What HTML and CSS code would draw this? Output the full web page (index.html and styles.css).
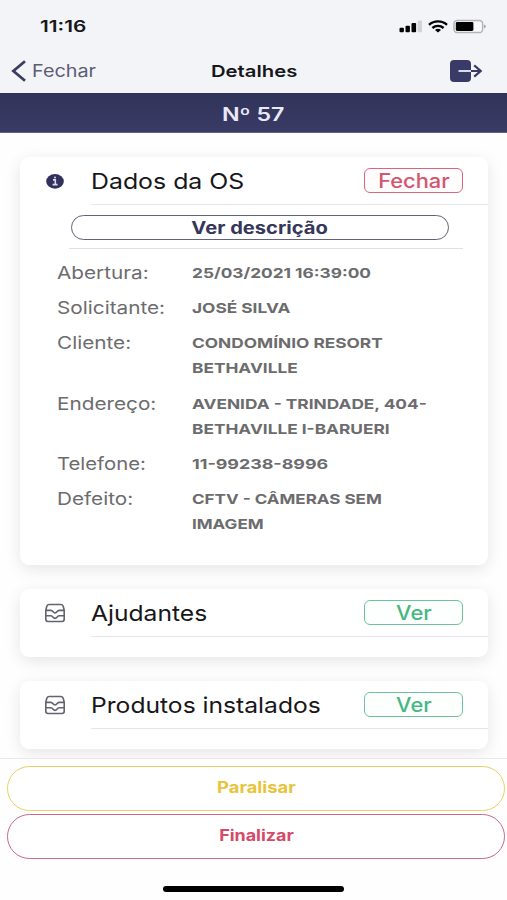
FILE: index.html
```html
<!DOCTYPE html>
<html lang="pt-BR">
<head>
<meta charset="utf-8">
<title>Detalhes</title>
<link rel="stylesheet" href="styles.css">
</head>
<body>
<div class="app">
  <header class="top">
    <div class="status">
      <span class="time wide">11:16</span>
      <div class="status-icons">
        <svg class="signal" width="24" height="13" viewBox="0 0 24 13"><rect x="0.5" y="7.8" width="4.4" height="4.4" rx="1"/><rect x="6.5" y="5.8" width="4.4" height="6.4" rx="1"/><rect x="12.5" y="3" width="4.6" height="9.2" rx="1"/><rect x="18.6" y="0.6" width="4.4" height="11.6" rx="1" fill="#d3d3d5"/></svg>
        <svg class="wifi" width="20" height="13" viewBox="0 0 20 13" fill="none" stroke="#000" stroke-width="2.4"><path d="M1 4.8C6 .2 14 .2 19 4.8"/><path d="M4.4 8C7.6 5.1 12.4 5.1 15.6 8"/><path d="M7 9.9C8.8 8.4 11.2 8.4 13 9.9L10 12.6Z" fill="#000" stroke="none"/></svg>
        <svg class="battery" width="33" height="15" viewBox="0 0 33 15"><rect x="1" y="1.4" width="28.6" height="12.2" rx="3.4" fill="#fafafb" stroke="#b4b4b8" stroke-width="1.5"/><rect x="2.8" y="3.1" width="17.6" height="8.8" rx="1.4"/><path d="M31 5.6q1.8.6 1.8 1.9T31 9.4Z" fill="#a5a5a9"/></svg>
      </div>
    </div>
    <nav class="nav">
      <a class="back"><svg width="15" height="22" viewBox="0 0 15 22" fill="none" stroke="#3b3c63" stroke-width="2.8"><path d="M14 1.2L2.4 11L14 20.8"/></svg><span class="back-text wide">Fechar</span></a>
      <h1 class="title"><span class="wide">Detalhes</span></h1>
      <svg class="exit" width="34" height="24" viewBox="0 0 34 24" fill="none"><rect x="1" y="1" width="21" height="22" rx="4" fill="#3a3a68"/><path d="M9.5 12H22" stroke="#d9daea" stroke-width="2"/><path d="M22 12H31.5M25.2 6.3L31.7 12L25.2 17.7" stroke="#3a3a68" stroke-width="2.2"/></svg>
    </nav>
  </header>
  <div class="band"><span class="wide">Nº 57</span></div>

  <main class="content">
    <section class="card card-main">
      <div class="card-head">
        <svg class="card-icon" width="22" height="20" viewBox="0 0 22 20"><ellipse cx="11" cy="10.4" rx="8.8" ry="7.3" fill="#32315e"/><path d="M9 8.9h2.3v4.4M8.6 13.6h5" stroke="#d9d9ea" stroke-width="1.6" fill="none"/><circle cx="11" cy="6.4" r="1" fill="#d9d9ea"/></svg>
        <div class="card-bar"><h2><span class="wide">Dados da OS</span></h2><button class="toggle close"><span class="wide">Fechar</span></button></div>
      </div>
      <div class="describe"><button class="pill"><span class="wide">Ver descrição</span></button></div>
      <dl class="fields">
        <dt><span class="wide">Abertura:</span></dt><dd><span class="wide">25/03/2021 16:39:00</span></dd>
        <dt><span class="wide">Solicitante:</span></dt><dd><span class="wide">JOSÉ SILVA</span></dd>
        <dt><span class="wide">Cliente:</span></dt><dd><span class="wide">CONDOMÍNIO RESORT<br>BETHAVILLE</span></dd>
        <dt><span class="wide">Endereço:</span></dt><dd><span class="wide">AVENIDA - TRINDADE, 404-<br>BETHAVILLE I-BARUERI</span></dd>
        <dt><span class="wide narrow">Telefone:</span></dt><dd><span class="wide phone">11-99238-8996</span></dd>
        <dt><span class="wide">Defeito:</span></dt><dd><span class="wide defect">CFTV - CÂMERAS SEM<br>IMAGEM</span></dd>
      </dl>
    </section>

    <section class="card card-small">
      <div class="card-head">
        <svg class="card-icon" width="22" height="20" viewBox="0 0 22 20" fill="none" stroke="#62636f" stroke-width="1.6" stroke-linejoin="round"><path d="M1.8 7.2L2.8 3.2Q3.4 1.5 5.4 1.5H16.6Q18.6 1.5 19.2 3.2L20.2 7.2V16Q20.2 18.5 18 18.5H4Q1.8 18.5 1.8 16Z"/><path d="M1.8 7.4H6.8Q8.2 7.4 8.8 8.6Q11 11.4 13.2 8.6Q13.8 7.4 15.2 7.4H20.2M1.8 12.8H6.8Q8.2 12.8 8.8 14Q11 16.8 13.2 14Q13.8 12.8 15.2 12.8H20.2"/></svg>
        <div class="card-bar"><h2><span class="wide">Ajudantes</span></h2><button class="toggle view"><span class="wide">Ver</span></button></div>
      </div>
    </section>

    <section class="card card-small">
      <div class="card-head">
        <svg class="card-icon" width="22" height="20" viewBox="0 0 22 20" fill="none" stroke="#62636f" stroke-width="1.6" stroke-linejoin="round"><path d="M1.8 7.2L2.8 3.2Q3.4 1.5 5.4 1.5H16.6Q18.6 1.5 19.2 3.2L20.2 7.2V16Q20.2 18.5 18 18.5H4Q1.8 18.5 1.8 16Z"/><path d="M1.8 7.4H6.8Q8.2 7.4 8.8 8.6Q11 11.4 13.2 8.6Q13.8 7.4 15.2 7.4H20.2M1.8 12.8H6.8Q8.2 12.8 8.8 14Q11 16.8 13.2 14Q13.8 12.8 15.2 12.8H20.2"/></svg>
        <div class="card-bar"><h2><span class="wide">Produtos instalados</span></h2><button class="toggle view"><span class="wide">Ver</span></button></div>
      </div>
    </section>
  </main>

  <footer class="actions">
    <button class="action pause"><span class="wide">Paralisar</span></button>
    <button class="action finish"><span class="wide">Finalizar</span></button>
    <div class="home"></div>
  </footer>
</div>
</body>
</html>
```
FILE: styles.css
```css
* { box-sizing: border-box; margin: 0; padding: 0; }
body { font-family: Inter, "Liberation Sans", sans-serif; background: #fff; color: #17171a; }
.app { width: 507px; height: 900px; display: flex; flex-direction: column; overflow: hidden; }

/* Letterforms are set wider than the font's own proportions. */
.wide { display: inline-block; white-space: nowrap; transform: scaleX(var(--w, 1.19)); transform-origin: var(--o, left) center; }

.top { height: 93px; background: #f3f4f7; }
.status { height: 48px; padding: 4px 21px 0 40px; display: flex; align-items: center; justify-content: space-between; }
.time { font-size: 16px; font-weight: 600; --w: 1.3; }
.status-icons { display: flex; align-items: center; }
.wifi { margin: 0 5px 0 5px; }
.nav { height: 45px; padding: 0 24px 0 11px; display: grid; grid-template-columns: 1fr auto 1fr; align-items: center; }
.back { display: flex; align-items: center; gap: 6px; color: #5c5d74; }
.back-text { font-size: 17px; --w: 1.165; }
.title { font-size: 16.5px; font-weight: 600; --w: 1.228; --o: center; transform: translateX(7px); }
.exit { justify-self: end; }
.band { height: 40px; background: linear-gradient(#30335a, #3a3b65); border-bottom: 1px solid #60627f; display: flex; align-items: center; justify-content: center; color: #e8eaf8; font-size: 18px; font-weight: 600; --w: 1.29; --o: center; padding-top: 3px; }

.content { height: 625px; padding: 24px 19.5px 0 20px; display: flex; flex-direction: column; gap: 24px; background: #fefefe; overflow: hidden; }
.card { background: #fff; border-radius: 9px; box-shadow: 0 4px 16px rgba(0, 0, 0, .1); flex: none; }
.card-main { height: 408px; }
.card-small { height: 68px; }
.card-head { height: 48px; padding-left: 24px; display: flex; align-items: center; gap: 25px; }
.card-bar { flex: 1; height: 48px; border-bottom: 1px solid #e6e6e8; display: flex; align-items: center; justify-content: space-between; padding-right: 24.5px; }
h2 { font-size: 22px; font-weight: 400; --w: 1.13; line-height: 26px; margin-left: -.5px; }
.card-small h2 { --w: 1.12; }
.toggle { width: 99px; height: 25px; border: 1.5px solid; border-radius: 6px; background: #fff; font: 500 19.5px/22px Inter, sans-serif; --w: 1.12; --o: center; display: flex; align-items: center; justify-content: center; padding-top: 1px; }
.close { color: #d3566f; border-color: #d8667d; background: #fffcfd; }
.view { color: #45b880; border-color: #6dc39a; background: #fdfffe; }
.describe { margin: 0 25px 0 49px; height: 44px; padding: 10px 14px 0 2px; border-bottom: 1px solid #e0e0e2; }
.pill { width: 100%; height: 25px; border: 1.5px solid #626379; border-radius: 13px; background: #fff; color: #36375a; font: 700 17px/20px Inter, sans-serif; --w: 1.185; --o: center; display: flex; justify-content: center; align-items: center; }
.fields { display: grid; grid-template-columns: 135px 1fr; padding: 11px 0 0 37px; row-gap: 10.2px; line-height: 25px; color: #6c6c6e; }
dt { font-size: 17.5px; --w: 1.185; }
dd { font-size: 13.8px; font-weight: 700; --w: 1.252; padding-top: 1px; margin-bottom: -1px; }
.narrow { --w: 1.16; }
.phone { --w: 1.294; }
.defect { --w: 1.233; }

.actions { flex: 1; border-top: 1px solid #e8e8ea; padding: 7px 2px 0 7px; display: flex; flex-direction: column; gap: 3px; background: #fefefe; }
.action { height: 45px; border: 1.5px solid; border-radius: 23px; background: #fff; font: 700 15.6px/20px Inter, sans-serif; --o: center; display: flex; justify-content: center; align-items: center; padding-bottom: 1px; }
.pause { color: #e8c43d; border-color: #e6d268; --w: 1.177; }
.finish { color: #d54a69; border-color: #cb6a82; --w: 1.149; }
.home { width: 181px; height: 6px; border-radius: 3px; background: #000; margin: 24px 0 0 156px; }
```
